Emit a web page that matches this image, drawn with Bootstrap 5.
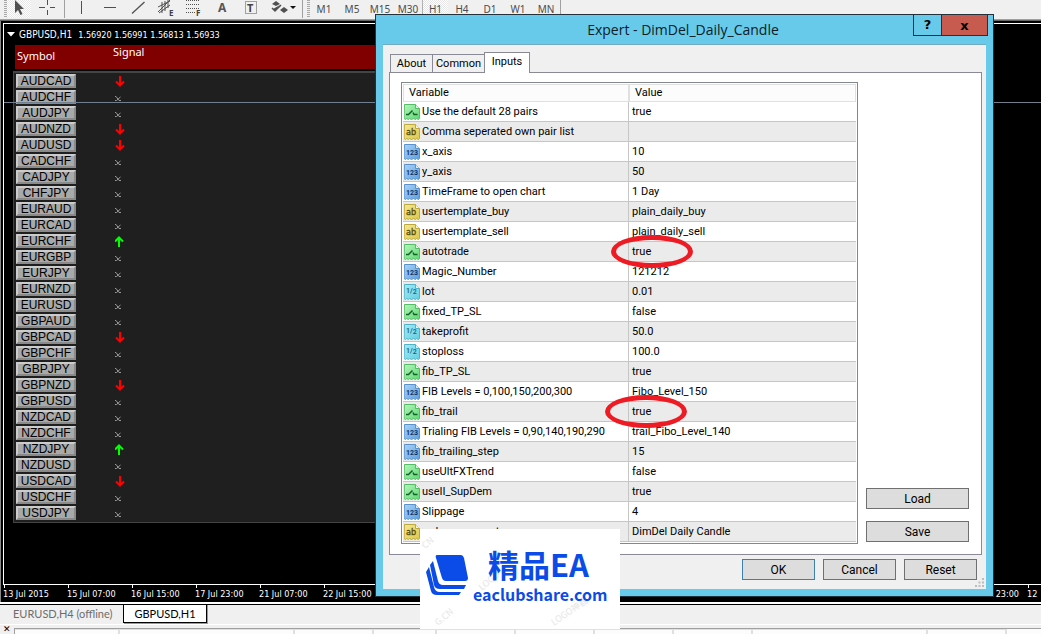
<!DOCTYPE html>
<html lang="en">
<head>
<meta charset="utf-8">
<meta name="viewport" content="width=device-width, initial-scale=1">
<title>Expert - DimDel_Daily_Candle</title>
<link rel="stylesheet" href="https://cdn.jsdelivr.net/npm/bootstrap@5.3.0/dist/css/bootstrap.min.css">
<style>
body{font-family:Roboto,"Liberation Sans",sans-serif;font-size:11px;line-height:14px;background:#f0f0f0;color:#000}
button{font:inherit;border-radius:0;padding:0}
/* toolbar */
.tools{height:21px;border-bottom:1px solid #666;box-shadow:inset 0 -1px #a0a0a0;background:#f0f0f0}
.grip{width:3px;height:17px;background:repeating-linear-gradient(#a8a8a8 0 1px,transparent 1px 2px)}
.tool{border:0;background:none;width:28px;height:18px;color:#4c4c4c;font-family:"Noto Sans",sans-serif;font-size:10px;line-height:14px}
.tool svg{display:block;margin:auto}
.tool-on{background:repeating-conic-gradient(#e6e6e6 0 25%,#fff 0 50%) 0 0/2px 2px}
.tool-first{width:24px}
.tool-cross{width:33px}
.tool-vert{width:32px}
.tool-menu{width:37px}
.tool-h1{width:26px;border-left:1px solid #b0b0b0}
.tool-sep{width:1px;height:18px;background:#a0a0a0}
/* chart */
.chart{background:#000;color:#fff;border-left:1px solid #888;padding:2px 0 0 2px;font-family:"DejaVu Sans Condensed","DejaVu Sans",sans-serif;font-size:9px;overflow:hidden}
.plot{border:solid #fff;border-width:1px 0 1px 1px}
.quote{height:21px;padding-left:3px}
.quote-name{font-size:10px;margin-right:6px}
.board-head{background:#800000;margin-left:11px;height:24px;font-family:"Noto Sans",sans-serif;font-size:11px;padding-left:2px}
.board-head span:first-child{width:96px;padding-top:4px}
.board{margin:2px 0 0 9px;border:1px solid #444;border-top-width:2px;background:#1f1f1f;padding:1px 0 0 2px}
.pair-row{height:16px}
.pair{width:60px;height:14px;border:2px solid;border-color:#ccc #8a8a8a #8a8a8a #ccc;background:#a9a9a9;color:#000;font-family:"Liberation Sans",sans-serif;font-size:12px;line-height:9px}
.pair-row svg{margin-left:39px}
.price-line{top:81px;left:3px;right:0;height:1px;background:#708090}
.axis{height:17px}
.axis span{flex:0 0 64px;white-space:nowrap;position:relative;line-height:18px}
.axis span::before{content:"";position:absolute;left:1px;top:0;width:1px;height:3px;background:#fff}
/* workspace tabs and terminal */
.sheets{border-top:2px solid #fff;border-bottom:1px solid #fff;height:23px;box-shadow:inset 0 1px #000;font-family:Lato,sans-serif}
.sheet{border:0;background:none;height:19px;color:#6d6d6d;padding:0 11px 0 13px}
.sheet-on{background:#fff;color:#000;border:1px solid #000;padding:0 10px;box-shadow:1px 1px #999}
.term{height:9px}
.term-x{border:0;background:none;width:14px;font-size:9px;line-height:9px}
.term-cols{border-top:1px solid #a0a0a0;border-left:1px solid #a0a0a0;margin-top:3px;background:#fcfcfc}
.term-cols i{border-right:2px solid #e0e0e0;border-top:1px solid #e0e0e0;flex:none}
/* dialog */
.dlg{left:375px;top:14px;width:619px;border:1px solid #23323a;background:#67caeb;padding:0 7px 7px}
.dlg-title{height:29px;font:14px/30px "Open Sans","Noto Sans",sans-serif;text-align:center;color:#0c1c24;padding-right:3px}
.dlg-ctl{top:-1px;right:5px}
.dlg-ctl button{height:22px;border:1px solid #23323a;background:#67caeb;width:29px;font:bold 13px/16px "DejaVu Sans",sans-serif}
.dlg-ctl .dlg-close{width:47px;background:#c75b50;margin-left:-1px;line-height:13px}
.dlg-body{background:#f0f0f0;border-top:1px solid #74a9c4;padding:7px 4px 9px 6px}
.tabs{padding-left:1px}
.tab-btn{border:1px solid #8a8a96;border-bottom:0;background:#f0f0f0;height:18px;width:43px;margin-right:-1px}
.tab-wide{width:53px}
.tab-on{background:#fff;height:21px;width:46px;margin-bottom:-1px;position:relative;padding-bottom:3px}
.pane{border:1px solid #8a8a96;background:#fff;padding:9px 12px 10px 11px}
.grid-box{border:1px solid #828790;padding:1px 1px 1px;width:457px}
.grid-box table{width:100%;table-layout:fixed;border-collapse:separate;border-spacing:0}
.grid-box th{font-weight:400;height:18px;border:1px solid #e0e0e0;background:#fcfcfc;padding:0 0 0 5px;width:226px}
.grid-box th+th{width:auto;border-left-width:1px}
.grid-box td{height:20px;border-bottom:1px solid #c6c6c6;padding:0 0 0 1px;white-space:nowrap}
.grid-box td+td{padding-left:3px}
.grid-box td:first-child{border-right:1px solid #c6c6c6}
.grid-box tbody tr:nth-child(even){background:#ebebeb}
.kind{width:16px;height:16px;margin-right:2px;vertical-align:middle}
.side-btns{padding-bottom:2px;gap:12px}
.win-btn{border:1px solid #707070;background:#ddd;height:21px;width:73px;font-size:12px}
.win-btn.wide{width:103px}
.win-btn.default{border-color:#3c7fb1}
.foot{padding:4px 5px 0 0}
.ring{width:82px;height:33px;border:5px solid #ed1c24;border-radius:50%}
.grip-corner{right:9px;bottom:9px}
/* site stamp */
.stamp{left:420px;top:529px;width:200px;height:100px;background:#fff;color:#0b4be8;font-family:"Noto Sans CJK SC",sans-serif;font-weight:700}
.stamp-art{left:0;top:0}
.stamp-text{padding:17px 0 0 53px}
.stamp-big{font-size:31px;line-height:36px;padding-left:15px;white-space:nowrap}
.stamp-small{font-size:16px;line-height:24px}
</style>
<script src="https://cdn.jsdelivr.net/npm/bootstrap@5.3.0/dist/js/bootstrap.bundle.min.js"></script>
</head>
<body>
<svg width="0" height="0" class="position-absolute" aria-hidden="true">
<defs>
<path id="sheet" d="M.5.5h11l4 4v10l-1 1-2-1-1 1-2-1-2 1-2-1-1 1-2-1-1 1-1.500-1z"/>
<linearGradient id="gg" x2="1" y2="1"><stop stop-color="#b4f5ba"/><stop offset="1" stop-color="#5fd873"/></linearGradient>
<linearGradient id="gy" x2="1" y2="1"><stop stop-color="#f4e89a"/><stop offset="1" stop-color="#ddc846"/></linearGradient>
<linearGradient id="gb" x2="1" y2="1"><stop stop-color="#a8d4f6"/><stop offset="1" stop-color="#5f9fe0"/></linearGradient>
<linearGradient id="gc" x2="1" y2="1"><stop stop-color="#a4ebf5"/><stop offset="1" stop-color="#62cfe2"/></linearGradient>
<symbol id="k-bool" viewBox="0 0 16 16"><use href="#sheet" fill="url(#gg)" stroke="#55bd68"/><path d="M11.500.5v4h4" fill="#d9fbdc" stroke="#55bd68"/><path d="M2 10.500h2.500l4-4M9 8.500l1 2h3.500" fill="none" stroke="#14602a" stroke-width="1.500"/></symbol>
<symbol id="k-str" viewBox="0 0 16 16"><use href="#sheet" fill="url(#gy)" stroke="#bda83c"/><path d="M11.500.5v4h4" fill="#fbf6cd" stroke="#bda83c"/><text x="2" y="11" font-family="DejaVu Sans Condensed" font-size="9" fill="#574a08" stroke="#574a08" stroke-width=".3">ab</text></symbol>
<symbol id="k-int" viewBox="0 0 16 16"><use href="#sheet" fill="url(#gb)" stroke="#5c92cc"/><path d="M11.500.5v4h4" fill="#d5ebfb" stroke="#5c92cc"/><text x="2" y="11" font-family="Roboto" font-weight="700" font-size="7" fill="#0c3468">123</text></symbol>
<symbol id="k-dbl" viewBox="0 0 16 16"><use href="#sheet" fill="url(#gc)" stroke="#50b4c8"/><path d="M11.500.5v4h4" fill="#d9f7fb" stroke="#50b4c8"/><text x="2" y="9" font-family="Roboto" font-weight="500" font-size="7" fill="#126070">1/<tspan dy="1">2</tspan></text></symbol>
<symbol id="s-down" viewBox="0 0 10 11"><path d="M5 0v9M1 5.500l4 4 4-4" fill="none" stroke="#f00" stroke-width="2"/></symbol>
<symbol id="s-up" viewBox="0 0 10 11"><path d="M4 11V2M0 5.500l4-4 4 4" fill="none" stroke="#0f0" stroke-width="2"/></symbol>
<symbol id="s-none" viewBox="0 0 10 11"><path d="M0 4.500h1l3 4h2M5.500 5l-4 3.500H0" fill="none" stroke="#999"/></symbol>
</defs>
</svg>

<div class="d-flex flex-column min-vh-100 overflow-hidden position-relative">
<header class="tools d-flex" role="toolbar" aria-label="Line studies and timeframes">
  <span class="grip ms-1"></span>
  <button class="tool tool-on tool-first" aria-label="Cursor"><svg width="24" height="18"><path d="M8 0v13l3-3 2.500 5 2-1-2.500-5h4z" fill="#505050"/></svg></button>
  <button class="tool tool-cross" aria-label="Crosshair"><svg width="33" height="18"><path d="M8 7.500h6M19 7.500h5M16.500 0v5M16.500 10v5" stroke="#505050"/></svg></button>
  <span class="tool-sep"></span>
  <button class="tool tool-vert" aria-label="Vertical line"><svg width="32" height="18"><path d="M16.500 1v13" stroke="#505050"/></svg></button>
  <button class="tool" aria-label="Horizontal line"><svg width="28" height="18"><path d="M7 7.500h12" stroke="#505050"/></svg></button>
  <button class="tool" aria-label="Trendline"><svg width="28" height="18"><path d="M7 13.500L19.500 2" stroke="#505050" stroke-width="1.300"/></svg></button>
  <button class="tool" aria-label="Equidistant channel"><svg width="28" height="18"><path d="M5 12L17 0M5 7l12-6M6 13l11-8M9 2v11M12 1v10M15 0v8" stroke="#505050" fill="none"/><text x="16" y="16" font-size="8" font-weight="700" fill="#404040">E</text></svg></button>
  <button class="tool" aria-label="Fibonacci retracement"><svg width="28" height="18"><path d="M5 .5h14M5 4.500h14M5 8.500h14M5 12.500h9" stroke="#505050" stroke-dasharray="1 1"/><text x="15" y="16" font-size="8" font-weight="700" fill="#404040">F</text></svg></button>
  <button class="tool" aria-label="Text"><svg width="28" height="18"><text x="9" y="12" font-size="12" font-weight="700" fill="#555">A</text></svg></button>
  <button class="tool" aria-label="Text label"><svg width="28" height="18"><path d="M8.500 1.500h11v12h-11z" fill="none" stroke="#505050" stroke-dasharray="1 1"/><text x="10" y="12" font-size="11" font-weight="700" fill="#444">T</text></svg></button>
  <button class="tool tool-menu" aria-label="Arrows"><svg width="37" height="18"><path d="M7 4l4-3 4 3-4 2zM8 9l2 2 5-6M15 10l4-3 4 3-4 3z" fill="#505050"/><path d="M7 8l3 3 6-6" fill="none" stroke="#505050" stroke-width="1.500"/><path d="M25 6h6l-3 3z" fill="#111"/></svg></button>
  <span class="tool-sep"></span>
  <span class="grip ms-1"></span>
  <button class="tool">M1</button><button class="tool">M5</button><button class="tool">M15</button><button class="tool">M30</button><button class="tool tool-on tool-h1">H1</button><button class="tool">H4</button><button class="tool">D1</button><button class="tool">W1</button><button class="tool">MN</button>
  <span class="tool-sep"></span>
</header>

<main class="chart flex-grow-1 d-flex flex-column position-relative">
  <div class="plot flex-grow-1">
    <div class="quote d-flex align-items-center"><svg width="8" height="5" class="me-1"><path d="M0 0h8L4 4.500z" fill="#fff"/></svg><span class="quote-name">GBPUSD,H1</span><span>1.56920 1.56991 1.56813 1.56933</span></div>
    <div class="board-head w-50 d-flex"><span>Symbol</span><span>Signal</span></div>
    <div class="board w-50" id="board"></div>
  </div>
  <div class="axis d-flex" id="axis"></div>
  <div class="price-line position-absolute"></div>
</main>

<nav class="sheets d-flex" aria-label="Charts">
  <button class="sheet">EURUSD,H4 (offline)</button>
  <button class="sheet sheet-on">GBPUSD,H1</button>
</nav>
<footer class="term d-flex">
  <button class="term-x" aria-label="Close terminal">✕</button>
  <div class="term-cols d-flex flex-grow-1" id="cols"></div>
</footer>

<section class="dlg position-absolute" role="dialog" aria-labelledby="dlgTitle">
  <div class="dlg-title" id="dlgTitle">Expert - DimDel_Daily_Candle</div>
  <div class="dlg-ctl position-absolute d-flex"><button aria-label="Help">?</button><button class="dlg-close" aria-label="Close">x</button></div>
  <div class="dlg-body">
    <div class="tabs d-flex align-items-end" role="tablist">
      <button class="tab-btn" role="tab">About</button><button class="tab-btn tab-wide" role="tab">Common</button><button class="tab-btn tab-on" role="tab">Inputs</button>
    </div>
    <div class="pane d-flex justify-content-between">
      <div class="grid-box position-relative">
        <table>
          <thead><tr><th scope="col">Variable</th><th scope="col">Value</th></tr></thead>
          <tbody id="rows"></tbody>
        </table>
        <span class="ring position-absolute" style="left:209px;top:152px"></span>
        <span class="ring position-absolute" style="left:203px;top:312px"></span>
      </div>
      <div class="side-btns d-flex flex-column justify-content-end">
        <button class="win-btn wide">Load</button>
        <button class="win-btn wide">Save</button>
      </div>
    </div>
    <div class="foot d-flex justify-content-end gap-2">
      <button class="win-btn default">OK</button><button class="win-btn">Cancel</button><button class="win-btn">Reset</button>
    </div>
    <svg class="grip-corner position-absolute" width="9" height="9"><path d="M7 0h2v2H7zM3.500 3.500h2v2h-2zM7 3.500h2v2H7zM0 7h2v2H0zM3.500 7h2v2h-2zM7 7h2v2H7z" fill="#bcbcbc"/></svg>
  </div>
</section>

<aside class="stamp position-absolute overflow-hidden">
  <svg class="stamp-art position-absolute" width="200" height="100" aria-hidden="true">
    <g fill="#e6e6e6" font-size="9" font-weight="400"><text transform="translate(5 20) rotate(-40)">CN</text><text transform="translate(18 97) rotate(-40)">G.CN</text><text transform="translate(62 62) rotate(-40)">LOGO</text><text transform="translate(134 97) rotate(-35)">LOGO神器</text></g>
    <g fill="#0b4be8"><path d="M17 26h24q2 0 3 3l4 20q0 3-3 3H26q-3 0-4-3L16 29q-1-3 1-3z"/><path d="M13 32l5 20q1 4 5 4h23l-2 4H20q-5 0-6-4L10 36zM9 38l5 20q1 5 6 5h21l-2 3H17q-5 0-6-4L6 43z"/></g>
  </svg>
  <div class="stamp-text position-relative"><div class="stamp-big">精品EA</div><div class="stamp-small">eaclubshare.com</div></div>
</aside>
</div>
<script>
const signals={AUDCAD:'down',AUDNZD:'down',AUDUSD:'down',EURCHF:'up',GBPCAD:'down',GBPNZD:'down',NZDJPY:'up',USDCAD:'down'};
const pairs='AUDCAD AUDCHF AUDJPY AUDNZD AUDUSD CADCHF CADJPY CHFJPY EURAUD EURCAD EURCHF EURGBP EURJPY EURNZD EURUSD GBPAUD GBPCAD GBPCHF GBPJPY GBPNZD GBPUSD NZDCAD NZDCHF NZDJPY NZDUSD USDCAD USDCHF USDJPY'.split(' ');
document.getElementById('board').innerHTML=pairs.map(p=>`<div class="pair-row d-flex align-items-start"><button class="pair">${p}</button><svg width="10" height="14" viewBox="0 -2 10 14"><use href="#s-${signals[p]||'none'}" width="10" height="11"/></svg></div>`).join('');
const times=['13 Jul 2015','15 Jul 07:00','16 Jul 15:00','17 Jul 23:00','21 Jul 07:00','22 Jul 15:00'];
document.getElementById('axis').innerHTML=Array.from({length:17},(_,i)=>i===15?'<span class="text-end pe-2">23:00</span>':`<span>${i===16?'12':times[i]||''}</span>`).join('');
document.getElementById('cols').innerHTML=[105,175,79,63,79,79,79,79,175,79].map(w=>`<i style="width:${w}px"></i>`).join('');
const rows=[['bool','Use the default 28 pairs','true'],['str','Comma seperated own pair list',''],['int','x_axis','10'],['int','y_axis','50'],['int','TimeFrame to open chart','1 Day'],['str','usertemplate_buy','plain_daily_buy'],['str','usertemplate_sell','plain_daily_sell'],['bool','autotrade','true'],['int','Magic_Number','121212'],['dbl','lot','0.01'],['bool','fixed_TP_SL','false'],['dbl','takeprofit','50.0'],['dbl','stoploss','100.0'],['bool','fib_TP_SL','true'],['int','FIB Levels = 0,100,150,200,300','Fibo_Level_150'],['bool','fib_trail','true'],['int','Trialing FIB Levels = 0,90,140,190,290','trail_Fibo_Level_140'],['int','fib_trailing_step','15'],['bool','useUltFXTrend','false'],['bool','useII_SupDem','true'],['int','Slippage','4'],['str','order_comment','DimDel Daily Candle']];
document.getElementById('rows').innerHTML=rows.map(([k,n,v])=>`<tr><td><svg class="kind"><use href="#k-${k}"/></svg>${n}</td><td>${v}</td></tr>`).join('');
</script>
</body>
</html>
